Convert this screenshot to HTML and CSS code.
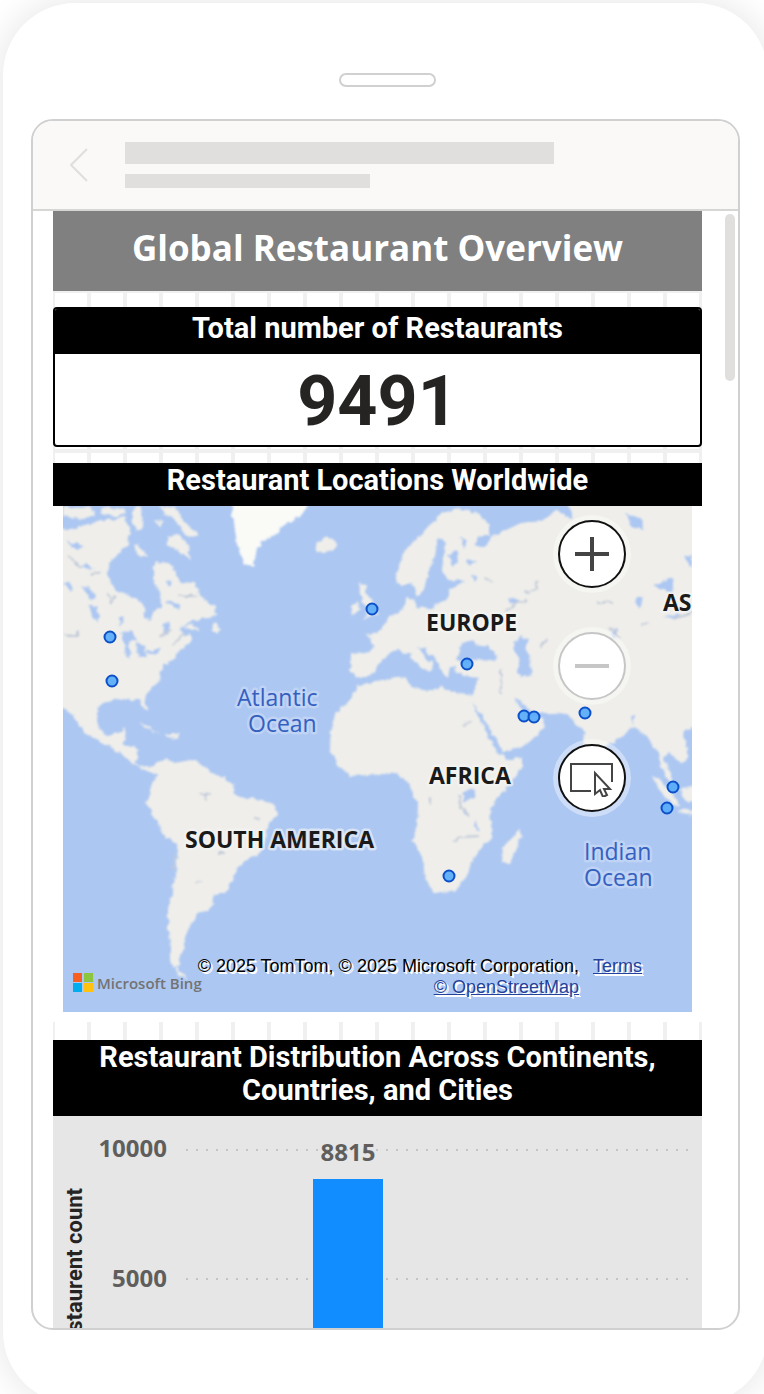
FILE: index.html
```html
<!DOCTYPE html>
<html lang="en">
<head>
<meta charset="utf-8">
<meta name="viewport" content="width=device-width, initial-scale=1">
<title>Global Restaurant Overview</title>
<link rel="stylesheet" href="styles.css">
</head>
<body>
<div class="stage">
  <div class="phone">
    <div class="speaker"></div>
    <div class="screen">
      <header class="app-bar">
        <button class="back" type="button" aria-label="Back">
          <svg width="18" height="34" viewBox="0 0 18 34" fill="none" stroke="#e0dfde" stroke-width="2"><path d="M17 1 1 17l16 16"/></svg>
        </button>
        <div class="placeholders">
          <div class="placeholder placeholder-title"></div>
          <div class="placeholder placeholder-sub"></div>
        </div>
      </header>
      <div class="viewport">
        <main class="canvas">
          <h1 class="report-title">Global Restaurant Overview</h1>

          <section class="card">
            <h2 class="visual-title">Total number of Restaurants</h2>
            <p class="card-value">9491</p>
          </section>

          <section class="map-visual">
            <h2 class="visual-title">Restaurant Locations Worldwide</h2>
            <div class="map">
              <svg class="map-art" viewBox="63 506 629 506">
                <defs>
                  <filter id="coast" x="-5%" y="-5%" width="110%" height="110%">
                    <feTurbulence type="fractalNoise" baseFrequency="0.16" numOctaves="2" seed="4"/>
                    <feDisplacementMap in="SourceGraphic" scale="6" xChannelSelector="R" yChannelSelector="G"/>
                    <feGaussianBlur stdDeviation="0.8"/>
                  </filter>
                </defs>
                <rect x="63" y="506" width="629" height="506" fill="#acc7f2"/>
                <g filter="url(#coast)">
                  <g fill="#efeeea">
                    <path d="M50 528 70 530 88 524 105 520 125 517 130 530 128 545 118 553 110 560 108 575 115 590 130 595 143 602 145 617 150 620 153 612 162 606 160 595 155 585 153 572 155 562 168 563 175 570 180 582 195 583 198 592 205 600 215 607 216 615 208 618 195 620 185 625 180 630 185 637 190 633 190 643 180 650 175 658 165 664 161 672 160 680 152 688 146 695 145 702 148 712 143 709 140 698 132 700 120 699 108 701 99 707 97 720 100 730 108 736 117 733 126 728 125 740 122 744 133 746 138 750 138 758 134 762 140 766 152 768 155 763 166 759 175 763 190 760 200 763 207 768 215 775 225 777 233 785 234 795 245 797 262 800 275 805 277 813 270 823 266 832 264 845 258 855 245 861 237 868 233 880 225 892 212 896 214 904 207 911 197 913 195 920 190 925 186 935 184 945 186 948 180 955 178 965 173 968 170 960 170 945 168 930 168 908 173 890 176 870 178 850 175 843 165 838 158 825 152 812 146 803 150 795 152 785 158 775 150 771 140 768 128 760 118 752 105 744 90 737 80 727 72 715 63 708 50 700Z"/>
                    <path d="M395 580 400 563 405 550 415 540 425 530 433 522 442 513 458 509 475 512 490 525 490 534 480 537 474 545 486 548 490 538 505 530 522 522 542 520 550 515 560 506 570 500 705 495 705 732 692 727 685 730 682 738 688 748 688 758 681 764 675 757 668 752 664 760 670 772 674 785 666 777 660 765 658 752 652 744 645 733 632 727 620 738 606 747 600 760 598 776 591 768 584 740 583 728 575 724 569 716 555 713 532 713 524 704 515 697 521 709 528 716 536 716 542 718 545 727 535 738 520 747 503 753 495 738 486 722 472 702 481 722 490 740 500 754 508 760 522 757 522 765 515 777 502 793 490 810 492 837 477 853 468 873 455 892 433 893 425 877 422 857 412 840 417 827 418 803 408 783 395 772 385 774 370 775 350 776 336 763 330 750 331 727 336 713 350 700 358 685 382 680 405 677 411 687 430 690 442 687 455 692 473 695 478 677 458 674 455 667 450 667 448 677 442 672 437 662 424 648 418 647 426 658 434 664 430 672 422 668 408 653 398 650 388 655 379 664 372 676 358 678 350 673 351 654 372 652 374 645 367 635 378 632 390 618 402 610 407 597 414 600 416 607 430 608 446 600 450 590 465 581 448 580 442 570 444 553 445 541 438 538 435 555 428 572 424 590 417 596 412 583 402 586Z"/>
                    <path d="M315 543 325 537 335 540 338 547 326 553 316 551ZM359 582 367 584 366 592 373 602 378 613 364 619 367 608 360 595ZM350 608 357 601 360 609 353 616ZM503 847 512 838 518 829 522 835 516 848 510 864 502 862ZM182 628 192 624 200 630ZM211 630 216 622 221 630 218 635ZM138 723 148 726 160 734 153 731ZM165 734 180 734 177 738 166 737ZM652 777 658 778 675 797 680 807 674 805 662 793ZM679 809 694 811 694 815 681 813ZM680 790 697 783 697 800 686 802ZM176 966 188 979 179 976Z"/>
                    <path d="M63 506 78 508 92 506 95 516 80 519 63 516ZM100 506 114 509 124 507 127 514 111 517 101 513ZM134 506 142 508 143 525 136 531 132 520ZM159 506 176 507 183 520 191 528 199 535 190 537 182 530 175 520 166 514ZM168 536 180 535 189 547 191 560 181 553 167 545ZM135 543 144 551 147 558 137 554ZM154 520 163 521 160 528Z"/>
                    <path d="M416 687 421 689 418 692ZM480 686 486 687 481 689ZM563 507 572 520 582 520 571 500Z"/>
                  </g>
                  <path fill="#fafaf7" d="M231 500 235 530 237 545 244 565 253 567 257 550 263 540 275 535 283 525 300 517 312 500Z"/>
                  <g fill="#acc7f2">
                    <path d="M457 659 462 643 472 640 479 647 487 646 497 657 492 662 477 659 467 663ZM513 643 521 637 529 640 526 650 530 656 532 674 521 677 517 671 520 662 516 653ZM547 502 566 502 574 517 568 518 557 509ZM626 515 641 517 644 530 631 527Z"/>
                    <path d="M80 585 91 588 96 598 91 600ZM89 605 97 607 99 622 93 619ZM121 633 131 630 137 640 129 641 130 658 126 657 124 643ZM135 642 144 645 147 657 139 658ZM145 652 160 648 158 654ZM64 584 70 582 72 592ZM118 619 124 617 121 627ZM65 541 82 545 77 550ZM81 568 86 563 94 569ZM163 600 180 604 179 610ZM165 579 173 583 170 587ZM163 624 171 621 168 635 165 634Z"/>
                    <path d="M448 555 456 551 459 562 453 565ZM460 536 467 541 464 550ZM465 559 477 561 470 566ZM471 576 478 575 475 582ZM654 585 672 578 674 594 661 590ZM635 598 643 597 639 609ZM664 616 680 614 676 620ZM611 633 618 629 615 639ZM508 598 520 600 515 606ZM684 557 692 555 692 568ZM631 715 635 715 633 727ZM463 792 475 789 475 798 465 801ZM462 807 464 815 469 814 463 811ZM475 819 479 831 474 828Z"/>
                  </g>
                  <g fill="none" stroke="#c2cad9" stroke-width="2">
                    <path d="M459 795 461 808 470 816M453 841 463 837 480 836M430 797v8M198 794h13M206 794v7M255 818h5M195 882h7M219 854h6M64 636h13v-6M108 592l3 10 5-5M179 596h18M68 556l14 12M91 575l10-4M506 613l9-9 12-4M525 593l12-4v-8M595 602h17M540 647l8-9M640 625l8-3M501 670v24M485 578l8 5M463 724l8-2M610 627l10 12M672 620l20-8M160 637l12-8M172 646l12-14M173 869l2-14"/>
                  </g>
                </g>
                <g class="place">
                  <text x="426" y="631">EUROPE</text>
                  <text x="429" y="784">AFRICA</text>
                  <text x="185" y="848">SOUTH AMERICA</text>
                  <text x="663" y="611">AS</text>
                </g>
                <g class="ocean">
                  <text x="237" y="706">Atlantic</text>
                  <text x="248" y="732">Ocean</text>
                  <text x="584" y="860">Indian</text>
                  <text x="584" y="886">Ocean</text>
                </g>
                <g fill="#55aafa" fill-opacity=".9" stroke="#0b50c8" stroke-width="2">
                  <circle cx="372" cy="609" r="5.5"/><circle cx="110" cy="637" r="5.5"/><circle cx="112" cy="681" r="5.5"/><circle cx="467" cy="664" r="5.5"/><circle cx="524" cy="716" r="5.5"/><circle cx="534" cy="717" r="5.5"/><circle cx="585" cy="713" r="5.5"/><circle cx="673" cy="787" r="5.5"/><circle cx="667" cy="808" r="5.5"/><circle cx="449" cy="876" r="5.5"/>
                </g>
                <path fill="#f65f20" d="M73 973h9v9h-9z"/><path fill="#8cc63e" d="M84 973h9v9h-9z"/><path fill="#00adef" d="M73 983h9v9h-9z"/><path fill="#ffc20e" d="M84 983h9v9h-9z"/>
                <text class="bing" x="97" y="989">Microsoft Bing</text>
              </svg>
              <div class="map-tools">
                <button class="tool" type="button" aria-label="Zoom in"><svg width="34" height="34" viewBox="0 0 34 34" stroke="#444" stroke-width="4"><path d="M0 17h34M17 0v34"/></svg></button>
                <button class="tool tool-off" type="button" aria-label="Zoom out" disabled><svg width="34" height="34" viewBox="0 0 34 34" stroke="#c6c6c6" stroke-width="4"><path d="M0 17h34"/></svg></button>
                <button class="tool" type="button" aria-label="Select area"><svg width="44" height="38" viewBox="0 0 44 38" fill="none" stroke="#444" stroke-width="2"><path d="M21 32H1V5h41v18"/><path d="M25 14v21l5-4 3 7 4-2-3-6h6Z"/></svg></button>
              </div>
              <div class="credits">
                <div class="credits-copy">© 2025 TomTom, © 2025 Microsoft Corporation,<br><a href="#osm">© OpenStreetMap</a></div>
                <a href="#terms">Terms</a>
              </div>
            </div>
          </section>

          <section class="chart-visual">
            <h2 class="visual-title">Restaurant Distribution Across Continents, Countries, and Cities</h2>
            <svg class="chart" viewBox="53 1116 649 312">
              <g fill="none" stroke="#c4c4c4" stroke-width="2" stroke-dasharray="2 8">
                <path d="M186 1150H691"/><path d="M186 1279H691"/>
              </g>
              <rect x="313" y="1179" width="70" height="229" fill="#118dff"/>
              <g class="tick"><text x="167" y="1157">10000</text><text x="167" y="1287">5000</text></g>
              <text class="bar-label" x="348" y="1161">8815</text>
              <text class="axis-title" transform="translate(82 1188) rotate(-90)">Restaurent count</text>
            </svg>
          </section>
        </main>
        <div class="scroll-thumb"></div>
      </div>
    </div>
  </div>
</div>
</body>
</html>
```
FILE: styles.css
```css
* { box-sizing: border-box; }

body {
  margin: 0;
  background: #fff;
  color: #252423;
  font-family: "Open Sans", "Noto Sans", sans-serif;
}

h1, h2, p { margin: 0; }

button {
  padding: 0;
  border: 0;
  background: none;
}

.stage {
  display: flex;
  height: 100vh;
  overflow: hidden;
  padding: 3px 0 0 3px;
}

.phone {
  display: flex;
  flex: 1;
  flex-direction: column;
  align-items: center;
  margin: 0 -4px -10px 0;
  padding: 70px 28px 74px;
  border-radius: 72px;
  background: #fff;
  box-shadow: 0 0 36px 2px rgba(0, 0, 0, 0.1);
}

.speaker {
  flex: none;
  width: 97px;
  height: 14px;
  margin: 0 0 32px 4px;
  border: 2px solid #d0d0d0;
  border-radius: 7px;
}

.screen {
  display: flex;
  flex: 1;
  flex-direction: column;
  align-self: stretch;
  min-height: 0;
  overflow: hidden;
  border: 2px solid #d0d0d0;
  border-radius: 22px;
}

.app-bar {
  display: flex;
  flex: none;
  align-items: center;
  gap: 37px;
  height: 90px;
  padding-left: 37px;
  border-bottom: 2px solid #d6d6d5;
  background: #faf9f8;
}

.back svg { display: block; }

.placeholders {
  display: grid;
  flex: 1;
  gap: 10px;
}

.placeholder { background: #e0dfde; }
.placeholder-title { width: 70%; height: 22px; }
.placeholder-sub { width: 40%; height: 14px; }

.viewport {
  position: relative;
  flex: 1;
  min-height: 0;
  overflow: hidden;
  padding: 0 36px 0 20px;
}

.scroll-thumb {
  position: absolute;
  top: 3px;
  right: 3px;
  width: 10px;
  height: 167px;
  border-radius: 5px;
  background: #e0dfde;
}

.canvas {
  display: flex;
  flex-direction: column;
  gap: 16px;
  background:
    linear-gradient(90deg, #f0f0f0 4px, transparent 4px) -2px -2px / 36px 40px,
    linear-gradient(#f0f0f0 4px, transparent 4px) -2px -2px / 36px 40px;
}

.report-title {
  padding-bottom: 6px;
  background: #808080;
  color: #fff;
  font-size: 35px;
  line-height: 74px;
  text-align: center;
}

.visual-title {
  padding: 1px 36px 9px;
  background: #000;
  color: #fff;
  font: bold 29px/33px Roboto, sans-serif;
  text-align: center;
}

.card {
  overflow: hidden;
  border: 2px solid #000;
  border-radius: 4px;
  background: #fff;
}

.card .visual-title { padding: 3px 36px 9px; }

.card-value {
  padding-top: 4px;
  font: bold 70px/87px Roboto, sans-serif;
  text-align: center;
}

.map-visual { background: #fff; }

.map {
  position: relative;
  margin: 0 10px 10px;
}

.map-art {
  display: block;
  width: 100%;
}

.place text, .ocean text {
  font-size: 23px;
  paint-order: stroke;
  stroke-linejoin: round;
  stroke-width: 5px;
}

.place text {
  fill: #1a1a1a;
  font-weight: 700;
  stroke: rgba(245, 245, 245, 0.6);
}

.ocean text {
  fill: #3560c0;
  stroke: rgba(205, 220, 248, 0.6);
}

.bing {
  fill: #737373;
  font-size: 15px;
  font-weight: 600;
}

.map-tools {
  position: absolute;
  top: 14px;
  right: 66px;
  display: grid;
  gap: 44px;
}

.tool {
  display: grid;
  place-items: center;
  width: 68px;
  height: 68px;
  border: 2px solid #111;
  border-radius: 50%;
  background: #fff;
  box-shadow: 0 0 0 5px rgba(255, 255, 255, 0.4);
}

.tool-off { border-color: #c6c6c6; }

.credits {
  position: absolute;
  right: 50px;
  bottom: 14px;
  display: flex;
  gap: 14px;
  color: #000;
  font: 18px/21px "Liberation Sans", Arial, sans-serif;
  text-shadow: 1px 1px 0 #fff, 2px 2px 0 #fff;
  white-space: nowrap;
}

.credits-copy { text-align: right; }
.credits a { color: #24429b; }

.chart-visual {
  margin-top: 2px;
  background: #e6e6e6;
}

.chart {
  display: block;
  width: 100%;
}

.tick text, .bar-label {
  fill: #605e5c;
  font-size: 24px;
  font-weight: 700;
}

.tick text { text-anchor: end; }
.bar-label { text-anchor: middle; }

.axis-title {
  fill: #252423;
  font: bold 22px Roboto, sans-serif;
  text-anchor: end;
}
```
